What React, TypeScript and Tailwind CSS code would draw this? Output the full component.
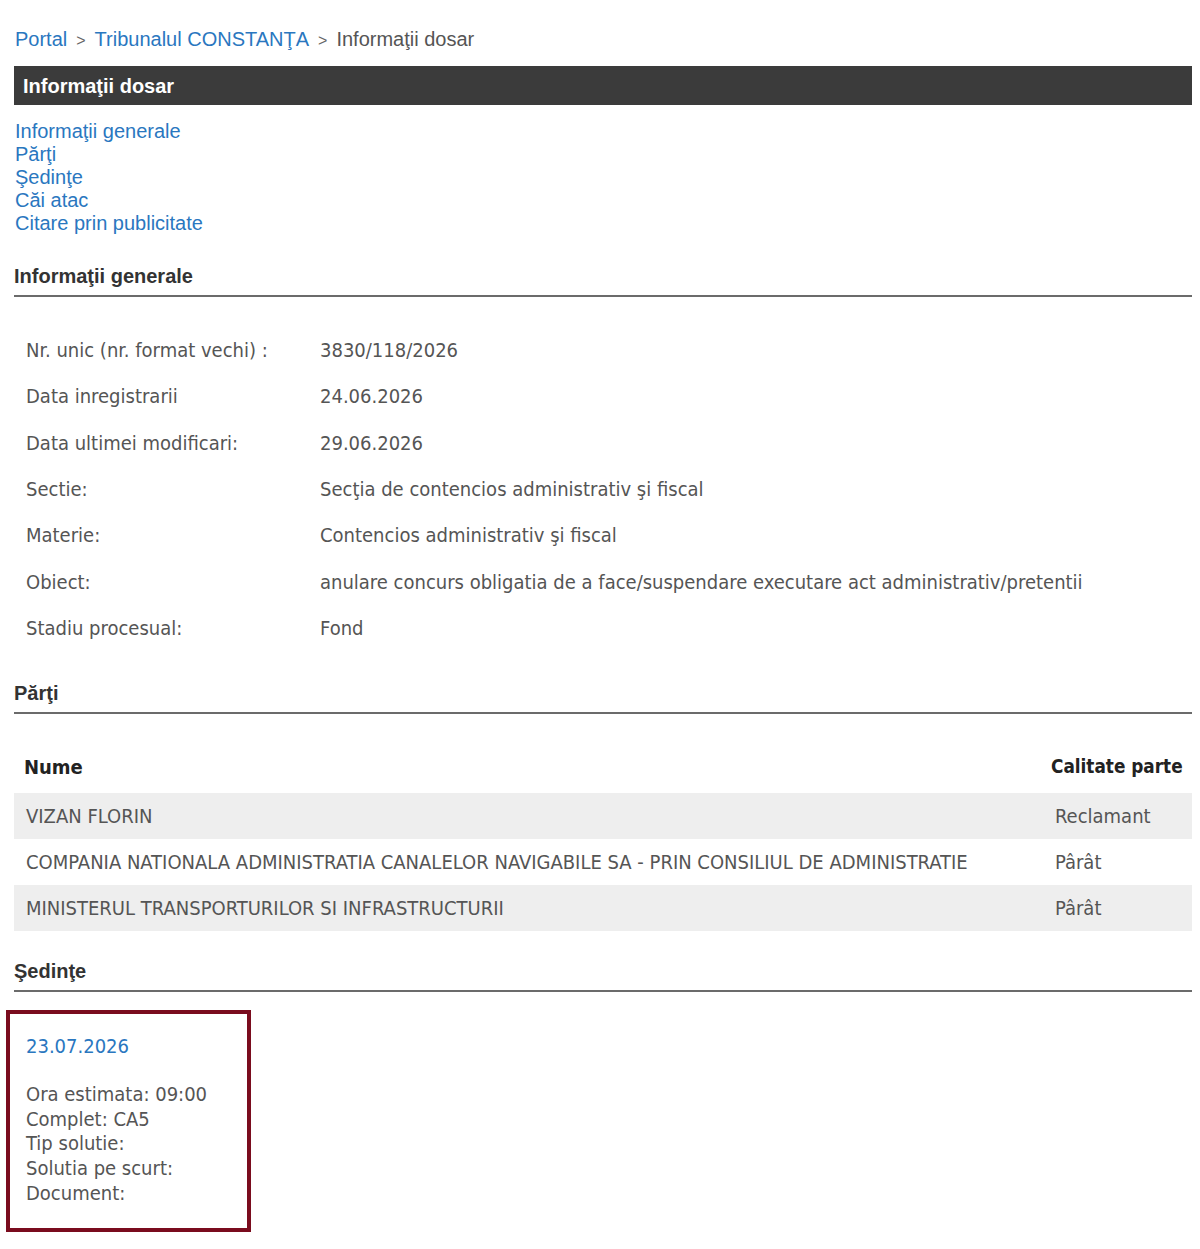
import React from 'react'

const arial = "font-['Liberation_Sans',Arial,sans-serif]"
const tahoma = "font-['DejaVu_Sans_Condensed','DejaVu_Sans',sans-serif] [font-stretch:condensed]"

const general = [
  ['Nr. unic (nr. format vechi) :', '3830/118/2026'],
  ['Data inregistrarii', '24.06.2026'],
  ['Data ultimei modificari:', '29.06.2026'],
  ['Sectie:', 'Secţia de contencios administrativ şi fiscal'],
  ['Materie:', 'Contencios administrativ şi fiscal'],
  ['Obiect:', 'anulare concurs obligatia de a face/suspendare executare act administrativ/pretentii'],
  ['Stadiu procesual:', 'Fond'],
]

const parti = [
  ['VIZAN FLORIN', 'Reclamant'],
  ['COMPANIA NATIONALA ADMINISTRATIA CANALELOR NAVIGABILE SA - PRIN CONSILIUL DE ADMINISTRATIE', 'Pârât'],
  ['MINISTERUL TRANSPORTURILOR SI INFRASTRUCTURII', 'Pârât'],
]

const SectionTitle = ({ children }: { children: React.ReactNode }) => (
  <div className="border-b-2 border-[#6b6b6b] pb-[7px]">
    <h3 className={`${arial} text-[20px] leading-[24px] font-bold text-[#333]`}>{children}</h3>
  </div>
)

export default function App() {
  return (
    <div className="bg-white w-[1200px] min-h-[1249px] pt-[26px] pl-[14px] pr-[8px]">
      {/* breadcrumb */}
      <div className={`${arial} text-[20px] leading-[26px] pl-[1px] text-[#555]`}>
        <a className="text-[#2a77bf]">Portal</a>
        <span className="mx-[9px] text-[#666] text-[16px]">&gt;</span>
        <a className="text-[#2a77bf]">Tribunalul CONSTANŢA</a>
        <span className="mx-[9px] text-[#666] text-[16px]">&gt;</span>
        <span>Informaţii dosar</span>
      </div>

      <div className="mt-[12px] bg-[#3b3b3b] h-[39px] flex items-center px-[9px]">
        <h2 className={`${arial} text-[20px] font-bold text-white`}>Informaţii dosar</h2>
      </div>

      <ul className={`${arial} mt-[15px] text-[20px] leading-[23px] text-[#2a77bf] pl-[1px]`}>
        <li>Informaţii generale</li>
        <li>Părţi</li>
        <li>Şedinţe</li>
        <li>Căi atac</li>
        <li>Citare prin publicitate</li>
      </ul>

      <div className="mt-[29px]">
        <SectionTitle>Informaţii generale</SectionTitle>
      </div>

      <table className={`${tahoma} mt-[30px] text-[20px] text-[#555] border-separate border-spacing-0`}>
        <tbody>
          {general.map(([k, v]) => (
            <tr key={k} className="h-[46.3px]">
              <td className="w-[306px] pl-[12px] align-middle">{k}</td>
              <td className="align-middle">{v}</td>
            </tr>
          ))}
        </tbody>
      </table>

      <div className="mt-[30px]">
        <SectionTitle>Părţi</SectionTitle>
      </div>

      <table className="mt-[27px] w-full table-fixed border-collapse text-[20px]">
        <colgroup>
          <col />
          <col className="w-[141px]" />
        </colgroup>
        <thead>
          <tr className="h-[52px]">
            <th className={`${tahoma} text-left font-bold text-[#222] pl-[10px] align-middle`}>Nume</th>
            <th className={`${tahoma} text-left font-bold text-[#222] text-[18.8px] whitespace-nowrap align-middle`}>Calitate parte</th>
          </tr>
        </thead>
        <tbody className={`${tahoma} text-[#555]`}>
          {parti.map(([n, c], i) => (
            <tr key={n} className={`h-[46px] ${i % 2 === 0 ? 'bg-[#eeeeee]' : 'bg-white'}`}>
              <td className="pl-[12px] whitespace-nowrap">{n}</td>
              <td className="pl-[4px]">{c}</td>
            </tr>
          ))}
        </tbody>
      </table>

      <div className="mt-[28px]">
        <SectionTitle>Şedinţe</SectionTitle>
      </div>

      <div className={`${tahoma} mt-[18px] -ml-[8px] w-[245px] border-[4px] border-[#7a0c1e] pl-[16px] pt-[18px] pb-[22px] text-[20px] text-[#555]`}>
        <div className="text-[#2a77bf] leading-[28px]">23.07.2026</div>
        <div className="mt-[22px] leading-[24.7px]">
          <div>Ora estimata: 09:00</div>
          <div>Complet: CA5</div>
          <div>Tip solutie:</div>
          <div>Solutia pe scurt:</div>
          <div>Document:</div>
        </div>
      </div>
    </div>
  )
}
